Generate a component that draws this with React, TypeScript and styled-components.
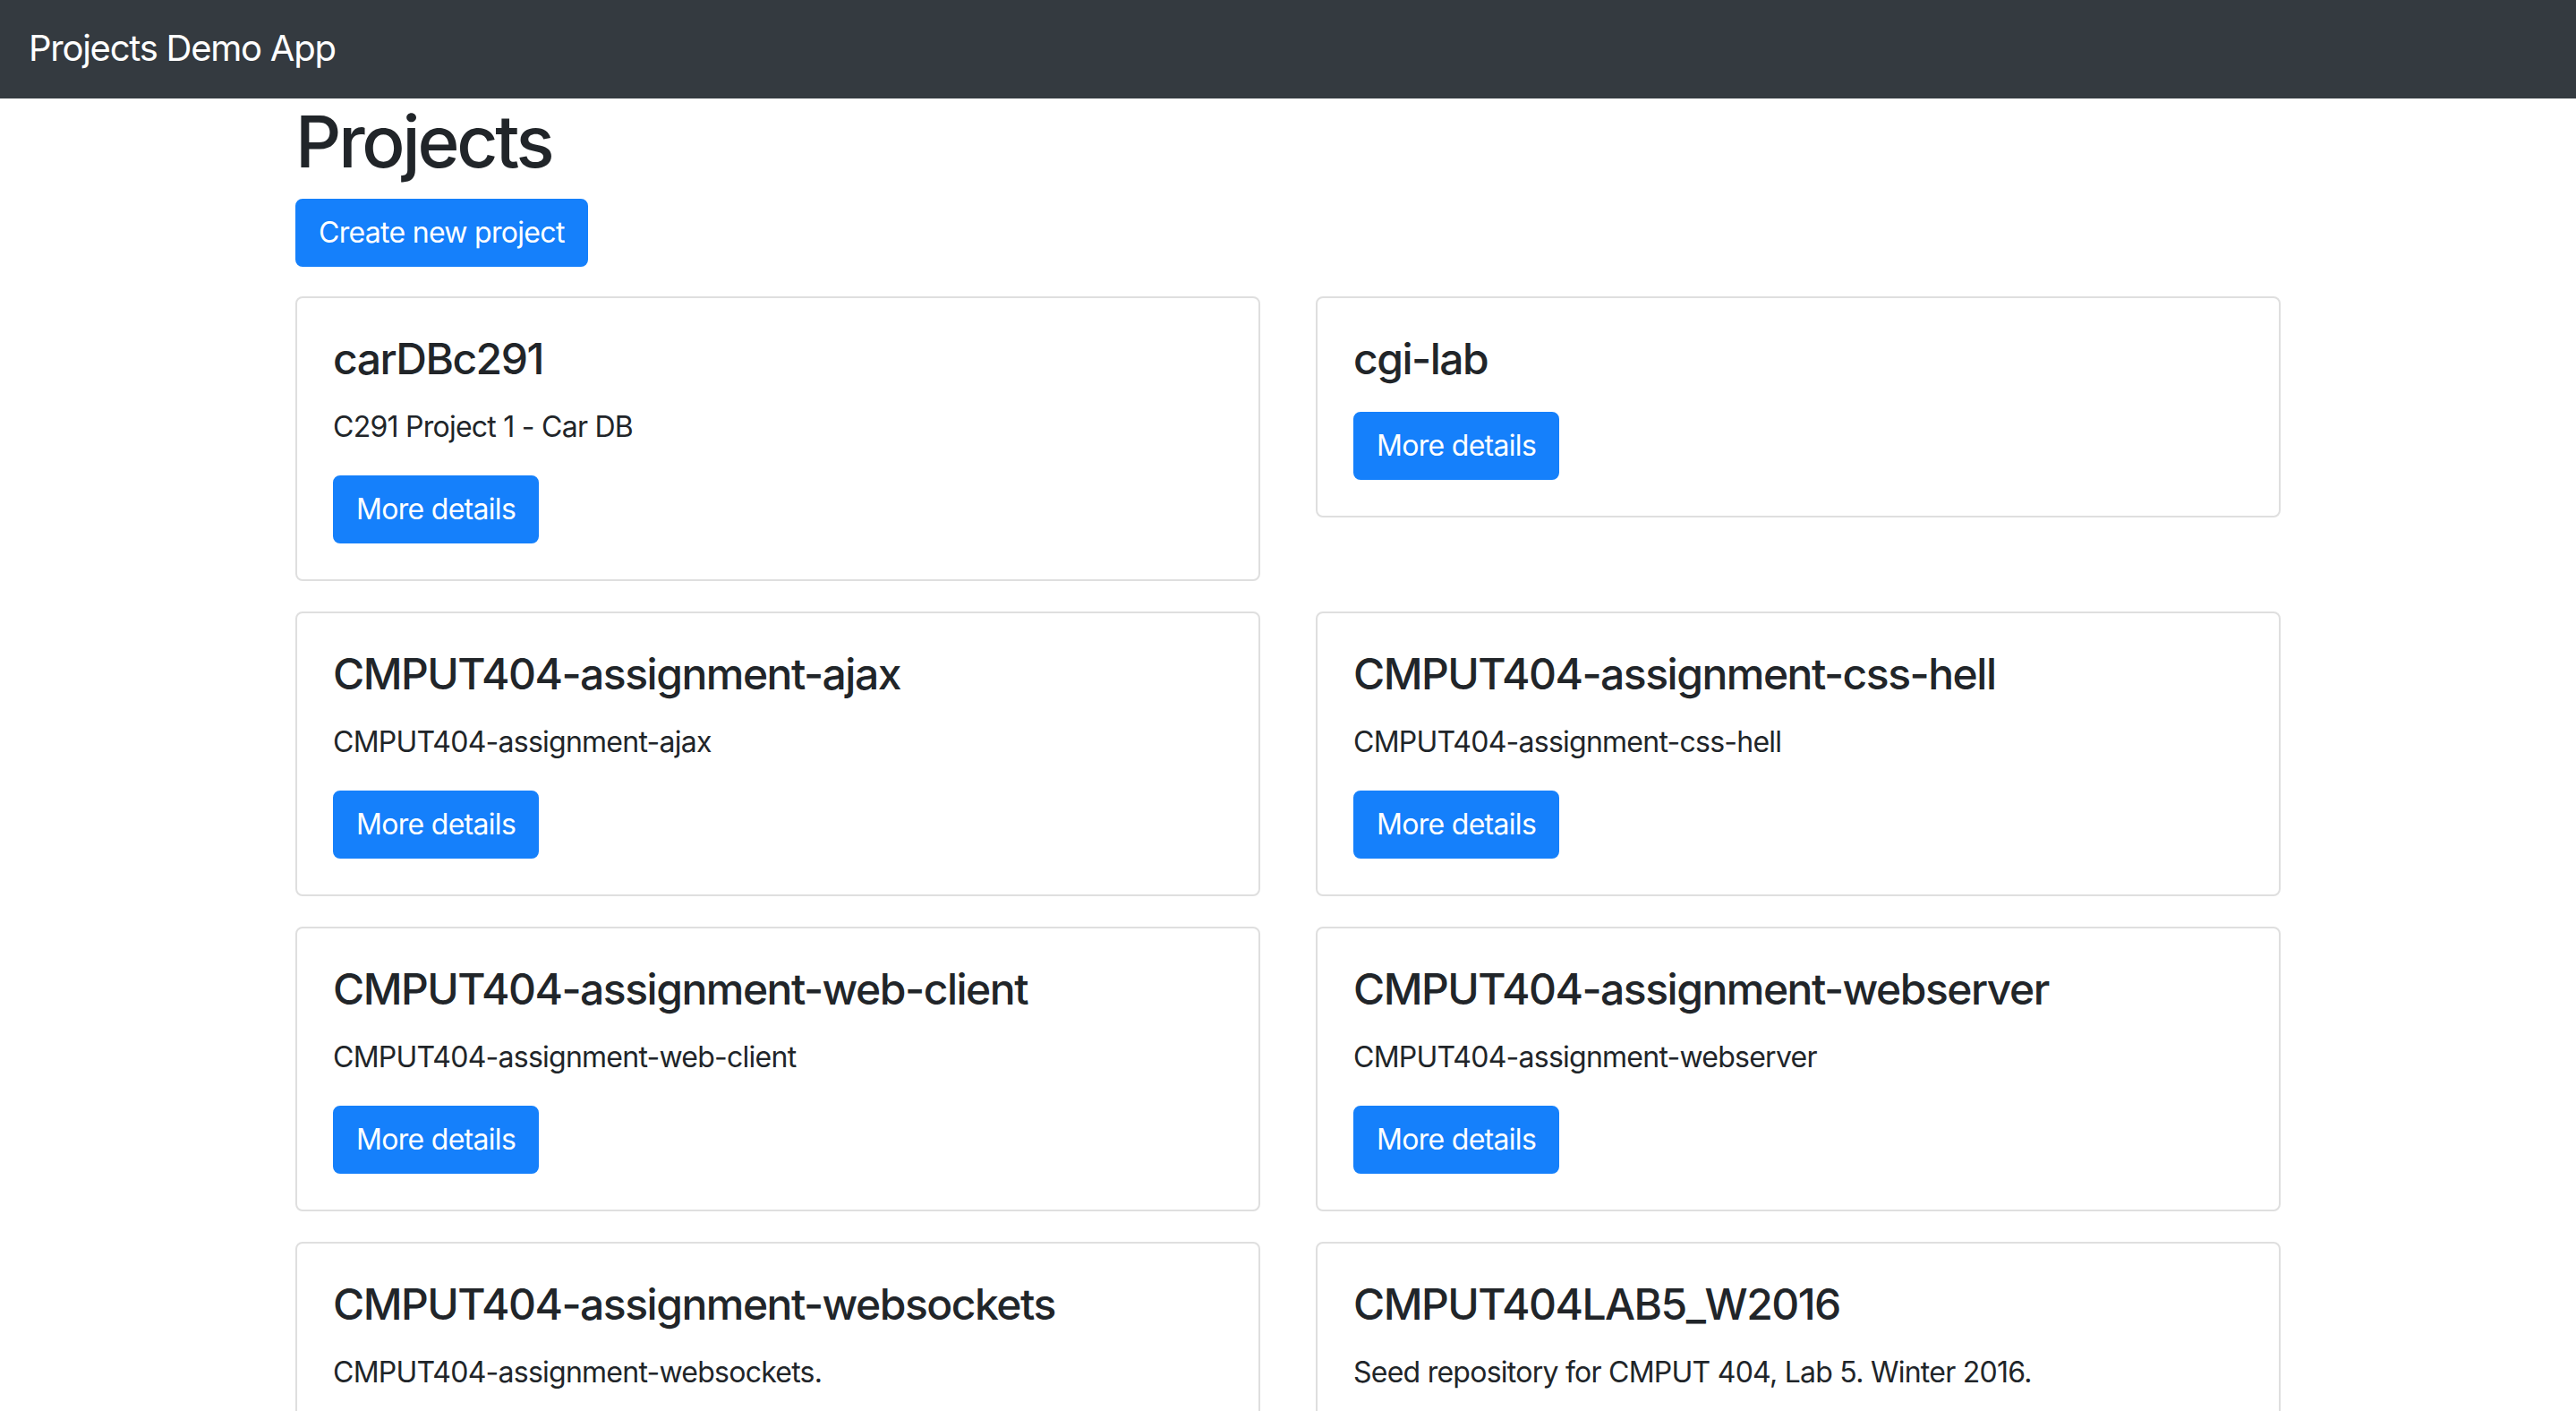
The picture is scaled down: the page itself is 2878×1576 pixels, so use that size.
import React from "react";
import styled, { createGlobalStyle } from "styled-components";

const GlobalStyle = createGlobalStyle`
  html, body {
    margin: 0;
    padding: 0;
    background: #ffffff;
  }
  body {
    font-family: Inter, "Noto Sans", "Liberation Sans", sans-serif;
    color: #212529;
    -webkit-font-smoothing: antialiased;
  }
  * { box-sizing: border-box; }
`;

const Navbar = styled.nav`
  display: flex;
  align-items: center;
  height: 110px;
  padding: 0 32px;
  background: #343a40;
`;

const Brand = styled.a`
  font-size: 40px;
  line-height: 60px;
  font-weight: 400;
  letter-spacing: -1.25px;
  color: #ffffff;
  text-decoration: none;
  margin-top: -2px;
`;

const Container = styled.main`
  width: 2218px;
  margin: 0 auto;
`;

const PageTitle = styled.h1`
  margin: 0 0 16px;
  font-size: 80px;
  line-height: 96px;
  font-weight: 500;
  letter-spacing: -3.2px;
  color: #212529;
`;

const PrimaryButton = styled.button`
  display: inline-block;
  height: 76px;
  padding: 0 24px;
  border: 2px solid #1580fb;
  border-radius: 8px;
  background: #1580fb;
  color: #ffffff;
  font-family: inherit;
  font-size: 32px;
  line-height: 48px;
  font-weight: 400;
  letter-spacing: -0.7px;
  cursor: pointer;
`;

const Grid = styled.div`
  display: grid;
  grid-template-columns: 1078px 1078px;
  column-gap: 62px;
  row-gap: 34px;
  align-items: start;
  margin-top: 33px;
`;

const Card = styled.section`
  border: 2px solid #dfdfdf;
  border-radius: 8px;
  background: #ffffff;
`;

const CardBody = styled.div`
  display: flex;
  flex-direction: column;
  align-items: flex-start;
  padding: 40px;
`;

const CardTitle = styled.h4<{ $alone: boolean }>`
  margin: 0 0 ${(p) => (p.$alone ? "31px" : "24px")};
  font-size: 48px;
  line-height: 56px;
  font-weight: 500;
  letter-spacing: -1.5px;
  color: #212529;
`;

const CardText = styled.p`
  margin: 0 0 30px;
  font-size: 32px;
  line-height: 48px;
  letter-spacing: -0.75px;
  color: #212529;
`;

type Project = { name: string; description?: string };

const projects: Project[] = [
  { name: "carDBc291", description: "C291 Project 1 - Car DB" },
  { name: "cgi-lab" },
  { name: "CMPUT404-assignment-ajax", description: "CMPUT404-assignment-ajax" },
  { name: "CMPUT404-assignment-css-hell", description: "CMPUT404-assignment-css-hell" },
  { name: "CMPUT404-assignment-web-client", description: "CMPUT404-assignment-web-client" },
  { name: "CMPUT404-assignment-webserver", description: "CMPUT404-assignment-webserver" },
  { name: "CMPUT404-assignment-websockets", description: "CMPUT404-assignment-websockets." },
  { name: "CMPUT404LAB5_W2016", description: "Seed repository for CMPUT 404, Lab 5. Winter 2016." },
];

function ProjectCard({ project }: { project: Project }) {
  return (
    <Card>
      <CardBody>
        <CardTitle $alone={!project.description}>{project.name}</CardTitle>
        {project.description && <CardText>{project.description}</CardText>}
        <PrimaryButton>More details</PrimaryButton>
      </CardBody>
    </Card>
  );
}

export default function App() {
  return (
    <>
      <GlobalStyle />
      <Navbar>
        <Brand href="#">Projects Demo App</Brand>
      </Navbar>
      <Container>
        <PageTitle>Projects</PageTitle>
        <PrimaryButton>Create new project</PrimaryButton>
        <Grid>
          {projects.map((p) => (
            <ProjectCard key={p.name} project={p} />
          ))}
        </Grid>
      </Container>
    </>
  );
}
